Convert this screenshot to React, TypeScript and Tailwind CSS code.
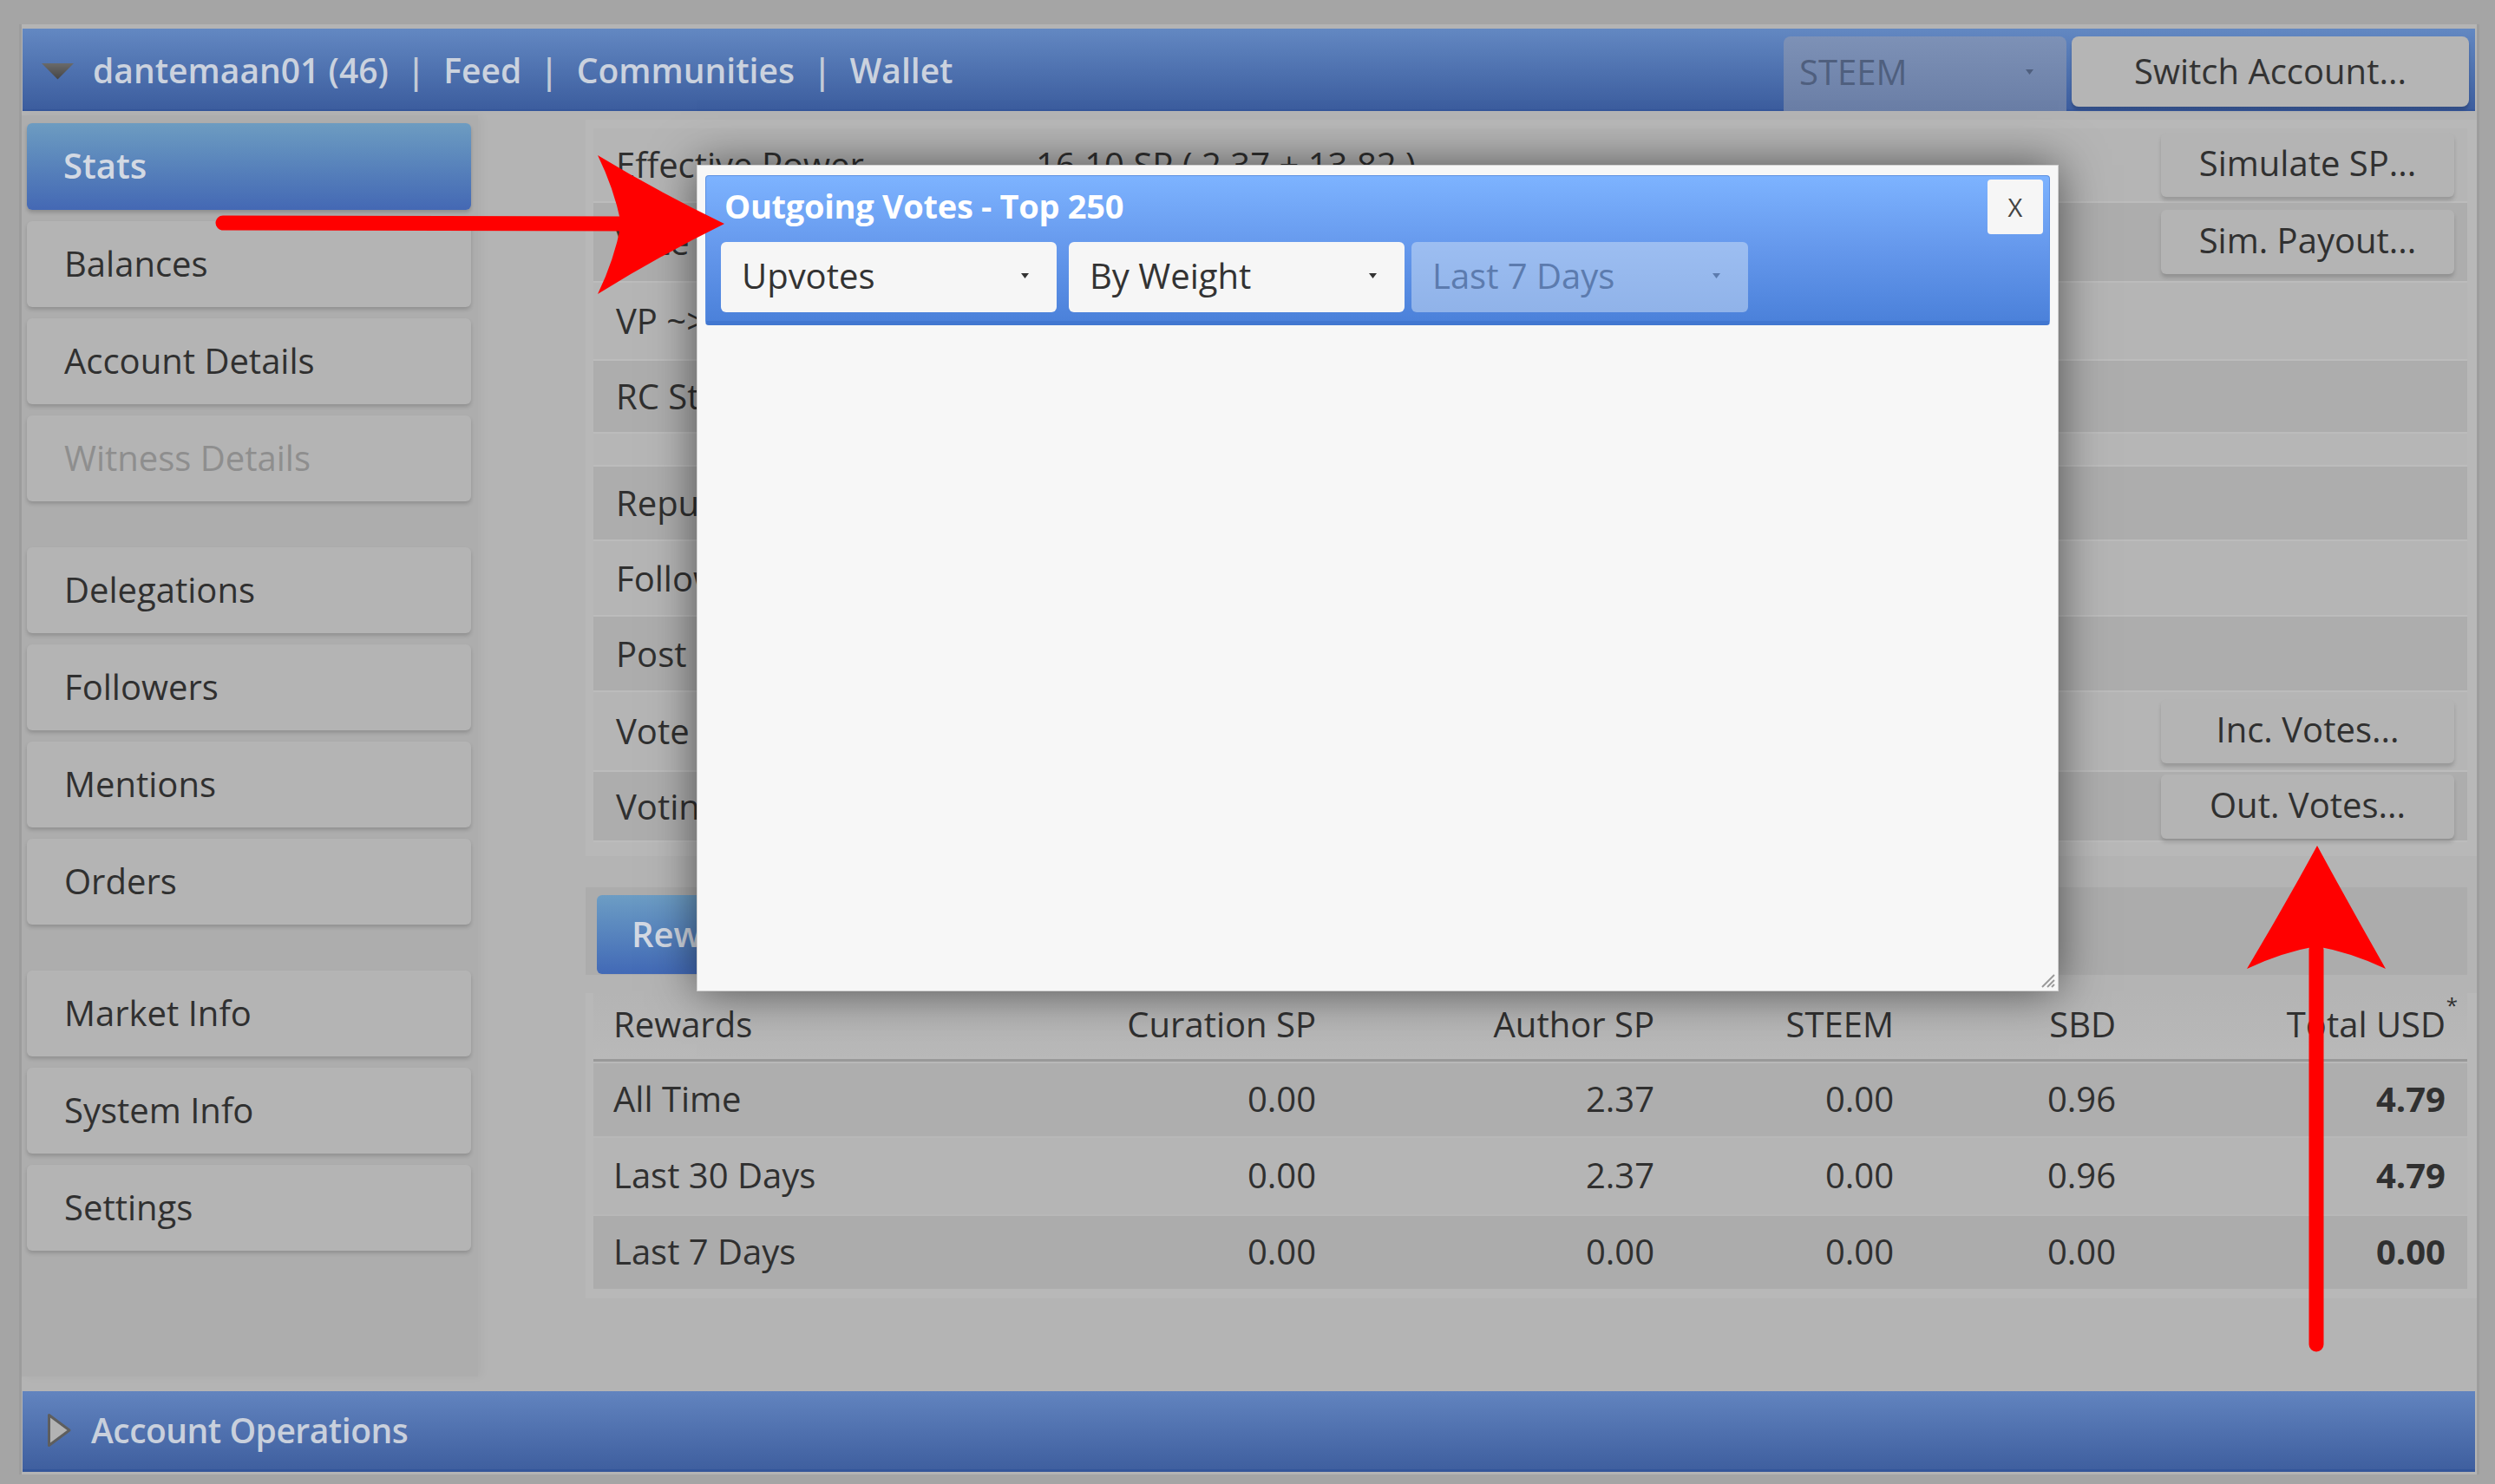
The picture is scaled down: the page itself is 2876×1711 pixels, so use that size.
import React from "react";

type StatRow = {
  label: string;
  value?: string;
  btn?: string;
  h: string;
  dark: boolean;
};

const statRows: (StatRow | "spacer")[] = [
  { label: "Effective Power", value: "16.10 SP ( 2.37 + 13.82 )", btn: "Simulate SP...", h: "h-[86px]", dark: false },
  { label: "Vote Value", btn: "Sim. Payout...", h: "h-[92px]", dark: true },
  { label: "VP ~> 100%", h: "h-[90px]", dark: false },
  { label: "RC Status", h: "h-[84px]", dark: true },
  "spacer",
  { label: "Reputation", h: "h-[86px]", dark: true },
  { label: "Followers", h: "h-[87px]", dark: false },
  { label: "Post Count", h: "h-[87px]", dark: true },
  { label: "Vote Count", btn: "Inc. Votes...", h: "h-[92px]", dark: false },
  { label: "Voting CSI", btn: "Out. Votes...", h: "h-[81px]", dark: true },
];

const rewardRows = [
  { label: "All Time", cur: "0.00", auth: "2.37", steem: "0.00", sbd: "0.96", usd: "4.79", bg: "bg-[#aeaeae]", h: "h-[84px]" },
  { label: "Last 30 Days", cur: "0.00", auth: "2.37", steem: "0.00", sbd: "0.96", usd: "4.79", bg: "bg-[#b5b5b5]", h: "h-[88px]" },
  { label: "Last 7 Days", cur: "0.00", auth: "0.00", steem: "0.00", sbd: "0.00", usd: "0.00", bg: "bg-[#acacac]", h: "h-[84px]" },
];

const menuGroups: { label: string; active?: boolean; disabled?: boolean }[][] = [
  [{ label: "Stats", active: true }, { label: "Balances" }, { label: "Account Details" }, { label: "Witness Details", disabled: true }],
  [{ label: "Delegations" }, { label: "Followers" }, { label: "Mentions" }, { label: "Orders" }],
  [{ label: "Market Info" }, { label: "System Info" }, { label: "Settings" }],
];

function DownTriangle() {
  return (
    <svg width="39" height="20" viewBox="0 0 39 20">
      <defs>
        <linearGradient id="tri-down" x1="0" y1="0" x2="0" y2="1">
          <stop offset="0" stopColor="#6a6a6a" />
          <stop offset="1" stopColor="#454545" />
        </linearGradient>
      </defs>
      <polygon points="1,1 38,1 19.5,19.5" fill="url(#tri-down)" />
    </svg>
  );
}

function RightTriangle() {
  return (
    <svg width="29" height="40" viewBox="0 0 29 40">
      <polygon points="2.5,2.5 26,20 2.5,37.5" fill="#b3b3b3" stroke="#5e5e5e" strokeWidth="3" strokeLinejoin="round" />
    </svg>
  );
}

function Caret({ color }: { color: string }) {
  return (
    <svg width="9" height="6" viewBox="0 0 9 6">
      <polygon points="0,0 9,0 4.5,6" fill={color} />
    </svg>
  );
}

function Separator() {
  return <span className="text-[#c3cad6]">|</span>;
}

function TopBar() {
  return (
    <div className="ml-[1px] mr-[2px] h-[95px] flex bg-gradient-to-b from-[#6388c2] to-[#3c5d9e] border-b-[2px] border-[#35569a]">
      <div className="flex items-center pl-[21px] pt-[4px] gap-[21px] text-[39px] font-semibold text-[#cbd2de]">
        <DownTriangle />
        <span>dantemaan01 (46)</span>
        <Separator />
        <span>Feed</span>
        <Separator />
        <span>Communities</span>
        <Separator />
        <span>Wallet</span>
      </div>
      <div className="ml-auto flex items-start pt-[9px] gap-[6px] pr-[7px]">
        <div className="w-[326px] h-[86px] rounded-t-[8px] bg-gradient-to-b from-[#7d91b6] to-[#6a7ea6] flex items-center pl-[18px] pr-[38px] pb-[4px] text-[40px] text-[#4f5f7e]">
          <span>STEEM</span>
          <span className="ml-auto flex">
            <Caret color="#4f5f7e" />
          </span>
        </div>
        <div className="w-[458px] h-[81px] rounded-[8px] bg-[#b5b5b5] shadow-[0_4px_3px_rgba(20,30,60,0.25)] flex items-center justify-center pb-[2px] text-[40px] text-[#333333]">
          Switch Account...
        </div>
      </div>
    </div>
  );
}

function Sidebar() {
  return (
    <div className="mt-[5px] w-[526px] h-[1454px] bg-[#adadad] pt-[9px] pl-[6px] pr-[8px] flex flex-col gap-[53px] shadow-[4px_0_10px_rgba(0,0,0,0.04)]">
      {menuGroups.map((group, gi) => (
        <div key={gi} className="flex flex-col gap-[13px]">
          {group.map((item) =>
            item.active ? (
              <div
                key={item.label}
                className="h-[100px] rounded-[6px] bg-gradient-to-b from-[#6d9cc1] to-[#4468b4] shadow-[0_3px_4px_rgba(0,0,0,0.18)] flex items-center pl-[42px] pb-[2px] text-[40px] font-semibold text-[#d3d9e3]"
              >
                {item.label}
              </div>
            ) : (
              <div
                key={item.label}
                className={
                  "h-[99px] rounded-[6px] bg-[#b4b4b4] shadow-[0_3px_4px_rgba(0,0,0,0.16)] flex items-center pl-[43px] pb-[2px] text-[40px] " +
                  (item.disabled ? "text-[#8e8e8e]" : "text-[#303030]")
                }
              >
                {item.label}
              </div>
            )
          )}
        </div>
      ))}
    </div>
  );
}

function StatsPanel() {
  return (
    <div className="mt-[10px] bg-[#b8b8b8] pl-[9px] pr-[11px] pt-[10px] pb-[16px] flex flex-col">
      {statRows.map((row, i) => {
        if (row === "spacer") {
          return <div key={i} className="h-[38px] bg-[#b6b6b6] border-b-[2px] border-[#bcbcbc]" />;
        }
        return (
          <div
            key={i}
            className={
              row.h +
              " flex items-center border-b-[2px] border-[#bcbcbc] text-[40px] text-[#303030] " +
              (row.dark ? "bg-[#adadad]" : "bg-[#b5b5b5]")
            }
          >
            <div className="w-[510px] pl-[26px] whitespace-nowrap">{row.label}</div>
            <div className="flex-1 whitespace-nowrap">{row.value}</div>
            {row.btn ? (
              <div className="mr-[15px] w-[338px] h-[74px] rounded-[6px] bg-[#b4b4b4] shadow-[0_4px_4px_rgba(0,0,0,0.16)] flex items-center justify-center pb-[4px]">
                {row.btn}
              </div>
            ) : null}
          </div>
        );
      })}
    </div>
  );
}

function RewardsPanel() {
  const cols = "grid grid-cols-[516px_342px_390px_276px_256px_380px] items-center";
  return (
    <>
      <div className="mt-[36px] mr-[11px] h-[101px] bg-[#acacac] pl-[13px] pt-[9px]">
        <div className="w-[220px] h-[91px] rounded-[6px] bg-gradient-to-b from-[#6d9dc4] to-[#4269b6] flex items-center pl-[40px] pb-[2px] text-[40px] font-semibold text-[#d3d9e3]">
          Rewards
        </div>
      </div>
      <div className="mt-[21px] bg-[#b8b8b8] pl-[9px] pr-[11px] pb-[11px] text-[40px] text-[#303030]">
        <div className={cols + " h-[79px] pb-[4px] bg-gradient-to-b from-[#b4b4b4] to-[#b9b9b9] border-b-[3px] border-[#999999]"}>
          <div className="pl-[23px]">Rewards</div>
          <div className="text-right pr-[25px]">Curation SP</div>
          <div className="text-right pr-[25px]">Author SP</div>
          <div className="text-right pr-[25px]">STEEM</div>
          <div className="text-right pr-[25px]">SBD</div>
          <div className="text-right pr-[25px]">
            <span className="relative">
              Total USD
              <span className="absolute -right-[14px] -top-[6px] text-[24px] leading-none">*</span>
            </span>
          </div>
        </div>
        {rewardRows.map((r) => (
          <div key={r.label} className={cols + " mt-[2px] pb-[3px] " + r.h + " " + r.bg}>
            <div className="pl-[23px]">{r.label}</div>
            <div className="text-right pr-[25px]">{r.cur}</div>
            <div className="text-right pr-[25px]">{r.auth}</div>
            <div className="text-right pr-[25px]">{r.steem}</div>
            <div className="text-right pr-[25px]">{r.sbd}</div>
            <div className="text-right pr-[25px] font-bold">{r.usd}</div>
          </div>
        ))}
      </div>
    </>
  );
}

function BottomBar() {
  return (
    <div className="mt-[17px] ml-[1px] mr-[2px] h-[93px] flex items-center gap-[22px] pl-[28px] bg-gradient-to-b from-[#6284bf] to-[#3f5f9f] border-b-[3px] border-[#34569a] text-[39px] font-semibold tracking-[-0.5px] text-[#c9d0dc]">
      <RightTriangle />
      <span>Account Operations</span>
    </div>
  );
}

function SelectBox({ label, disabled, w }: { label: string; disabled?: boolean; w: string }) {
  return (
    <div
      className={
        w +
        " h-[81px] rounded-[6px] flex items-center pl-[24px] pr-[32px] pb-[3px] text-[40px] " +
        (disabled ? "bg-[rgba(210,225,245,0.5)] text-[#5c7bae]" : "bg-[#f6f6f6] text-[#333333]")
      }
    >
      <span>{label}</span>
      <span className="ml-auto flex">
        <Caret color={disabled ? "#5c7bae" : "#333333"} />
      </span>
    </div>
  );
}

function VotesDialog() {
  return (
    <div className="absolute left-[803px] top-[190px] w-[1570px] h-[953px] bg-[#f7f7f7] border border-[#d2d2d2] pt-[11px] px-[9px] shadow-[0_0_50px_rgba(0,0,0,0.55)]">
      <div className="h-[173px] rounded-[4px] border border-[#5c90e2] border-b-[5px] border-b-[#4277d0] bg-gradient-to-b from-[#7db3ff] via-[#6598ec] to-[#4b81da] pt-[4px]">
        <div className="h-[72px] flex items-start pl-[21px] pr-[7px]">
          <div className="h-[63px] flex items-center pb-[2px] text-[38px] font-bold tracking-[-0.3px] text-white">Outgoing Votes - Top 250</div>
          <div className="ml-auto w-[64px] h-[63px] rounded-[4px] bg-[#f6f6f6] flex items-center justify-center text-[29px] text-[#444444]">
            X
          </div>
        </div>
        <div className="flex pl-[17px]">
          <SelectBox label="Upvotes" w="w-[387px]" />
          <div className="w-[14px]" />
          <SelectBox label="By Weight" w="w-[387px]" />
          <div className="w-[8px]" />
          <SelectBox label="Last 7 Days" w="w-[388px]" disabled />
        </div>
      </div>
      <svg className="absolute right-[3px] bottom-[3px]" width="18" height="18" viewBox="0 0 18 18">
        <line x1="17" y1="3" x2="3" y2="17" stroke="#9a9a9a" strokeWidth="2" />
        <line x1="17" y1="9" x2="9" y2="17" stroke="#9a9a9a" strokeWidth="2" />
        <line x1="17" y1="14" x2="14" y2="17" stroke="#9a9a9a" strokeWidth="2" />
      </svg>
    </div>
  );
}

function Arrows() {
  return (
    <svg className="absolute left-0 top-0 pointer-events-none" width="2876" height="1711" viewBox="0 0 2876 1711">
      <line x1="257" y1="257" x2="722" y2="258" stroke="#ff0000" strokeWidth="17" strokeLinecap="round" />
      <path d="M689,179 Q760,222 835,258 Q760,295 689,339 Q708,300 716,258 Q708,218 689,179 Z" fill="#ff0000" />
      <line x1="2670" y1="1550" x2="2670" y2="1095" stroke="#ff0000" strokeWidth="17" strokeLinecap="round" />
      <path d="M2590,1117 Q2633,1045 2671,975 Q2709,1045 2750,1117 Q2710,1098 2670,1091 Q2630,1098 2590,1117 Z" fill="#ff0000" />
    </svg>
  );
}

export default function App() {
  return (
    <div className="relative w-[2876px] h-[1711px] overflow-hidden bg-[#a5a5a5] pt-[28px] pl-[22px] font-['Open_Sans','Liberation_Sans',sans-serif] text-[#303030]">
      <div className="w-[2836px] h-[1672px] bg-[#b4b4b4] border-x-[3px] border-[#9d9d9d] pt-[5px] flex flex-col">
        <TopBar />
        <div className="flex h-[1459px]">
          <Sidebar />
          <div className="ml-[124px] w-[2180px] flex flex-col">
            <StatsPanel />
            <RewardsPanel />
          </div>
        </div>
        <BottomBar />
      </div>
      <VotesDialog />
      <Arrows />
    </div>
  );
}
